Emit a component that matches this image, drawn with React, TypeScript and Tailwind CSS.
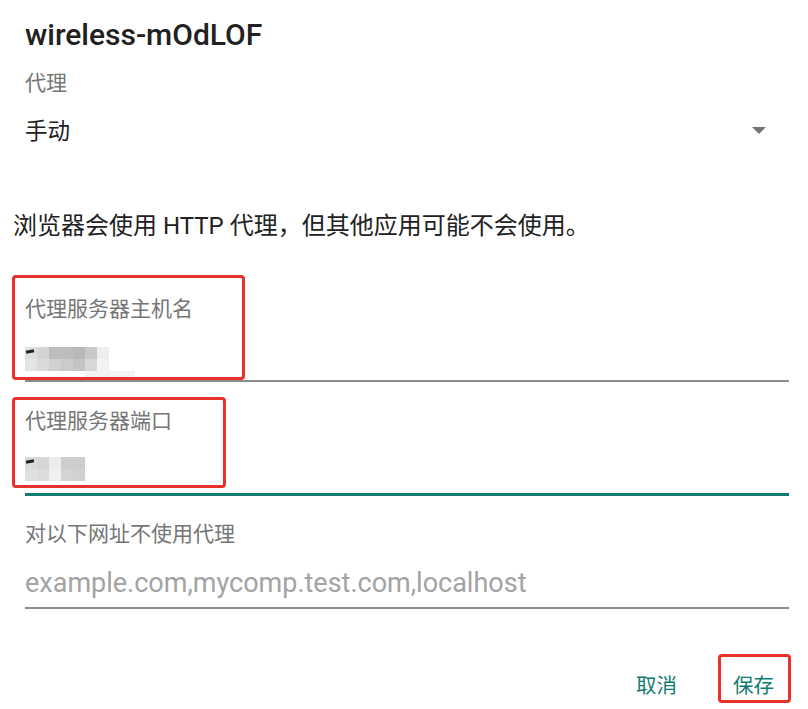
import React from 'react'

const font = { fontFamily: 'Roboto, "Noto Sans CJK SC", sans-serif' }

// mosaic blocks standing in for the blurred field values
const hostRows = [
  ['#dedede', '#d4d4d4', '#bdbdbd', '#bdbdbd', '#b8b8b8', '#c9c9c9', '#eeeeee'],
  ['#e4e4e4', '#dadada', '#d0d0d0', '#cbcbcb', '#c4c4c4', '#d8d8d8', '#f3f3f3'],
]
const portRows = [
  ['#dadada', '#d6d6d6', '#ececec', '#cdcdcd', '#cdcdcd'],
  ['#e0e0e0', '#dcdcdc', '#f0f0f0', '#d4d4d4', '#d2d2d2'],
]

function Mosaic({ rows, tail }: { rows: string[][]; tail?: boolean }) {
  return (
    <div className="relative flex flex-col">
      {rows.map((row, i) => (
        <div key={i} className="flex">
          {row.map((c, j) => (
            <div key={j} className="w-[12px] h-[12px]" style={{ background: c }} />
          ))}
        </div>
      ))}
      {tail && <div className="ml-[60px] w-[50px] h-[8px] bg-[#f3f3f3]" />}
      <div className="absolute left-[1px] top-[3px] w-[8px] h-[3px] bg-[#222] -rotate-12" />
    </div>
  )
}

export default function App() {
  return (
    <div className="w-[808px] h-[709px] bg-white overflow-hidden pt-[20px] pl-[25px] pr-[19px]" style={font}>
      <div className="h-[30px] leading-[30px] text-[30px] font-medium text-[#212121]">wireless-mOdLOF</div>

      <div className="mt-[21px] h-[24px] leading-[24px] text-[21px] text-[#757575]">代理</div>

      <div className="mt-[22px] h-[28px] flex items-center justify-between">
        <span className="text-[22.5px] leading-[28px] text-[#212121]">手动</span>
        <svg width="14" height="8" viewBox="0 0 14 8" className="mr-[23px]">
          <path d="M0 0h14L7 7z" fill="#757575" />
        </svg>
      </div>

      <div className="mt-[66px] -ml-[12px] h-[30px] leading-[30px] text-[24px] text-[#212121] whitespace-nowrap">
        浏览器会使用 HTTP 代理，但其他应用可能不会使用。
      </div>

      {/* 主机名 */}
      <div className="relative mt-[56px]">
        <div className="h-[24px] leading-[24px] text-[21px] text-[#757575]">代理服务器主机名</div>
        <div className="h-[59px] pt-[26px]">
          <Mosaic rows={hostRows} tail />
        </div>
        <div className="h-[2px] bg-[#8c8c8c]" />
        <div className="absolute -top-[22px] -left-[13px] w-[233px] h-[105px] border-[3px] border-[#e8312a] rounded-[4px]" />
      </div>

      {/* 端口 */}
      <div className="relative mt-[27px]">
        <div className="h-[24px] leading-[24px] text-[21px] text-[#757575]">代理服务器端口</div>
        <div className="h-[60px] pt-[24px]">
          <Mosaic rows={portRows} />
        </div>
        <div className="h-[3px] bg-[#127b71]" />
        <div className="absolute -top-[12px] -left-[13px] w-[214px] h-[91px] border-[3px] border-[#e8312a] rounded-[4px]" />
      </div>

      <div className="mt-[26px] h-[24px] leading-[24px] text-[21px] text-[#757575]">对以下网址不使用代理</div>
      <div className="mt-[22px] h-[30px] leading-[30px] text-[27px] text-[#a3a3a3]">
        example.com,mycomp.test.com,localhost
      </div>
      <div className="mt-[9px] h-[2px] bg-[#8c8c8c]" />

      <div className="mt-[62px] h-[30px] flex justify-end gap-[56px] pr-[15px] text-[20.5px] leading-[30px] text-[#127b71]">
        <span>取消</span>
        <span className="relative">
          保存
          <span className="absolute -top-[17px] -left-[15px] w-[73px] h-[49px] border-[3px] border-[#e8312a] rounded-[4px]" />
        </span>
      </div>
    </div>
  )
}
